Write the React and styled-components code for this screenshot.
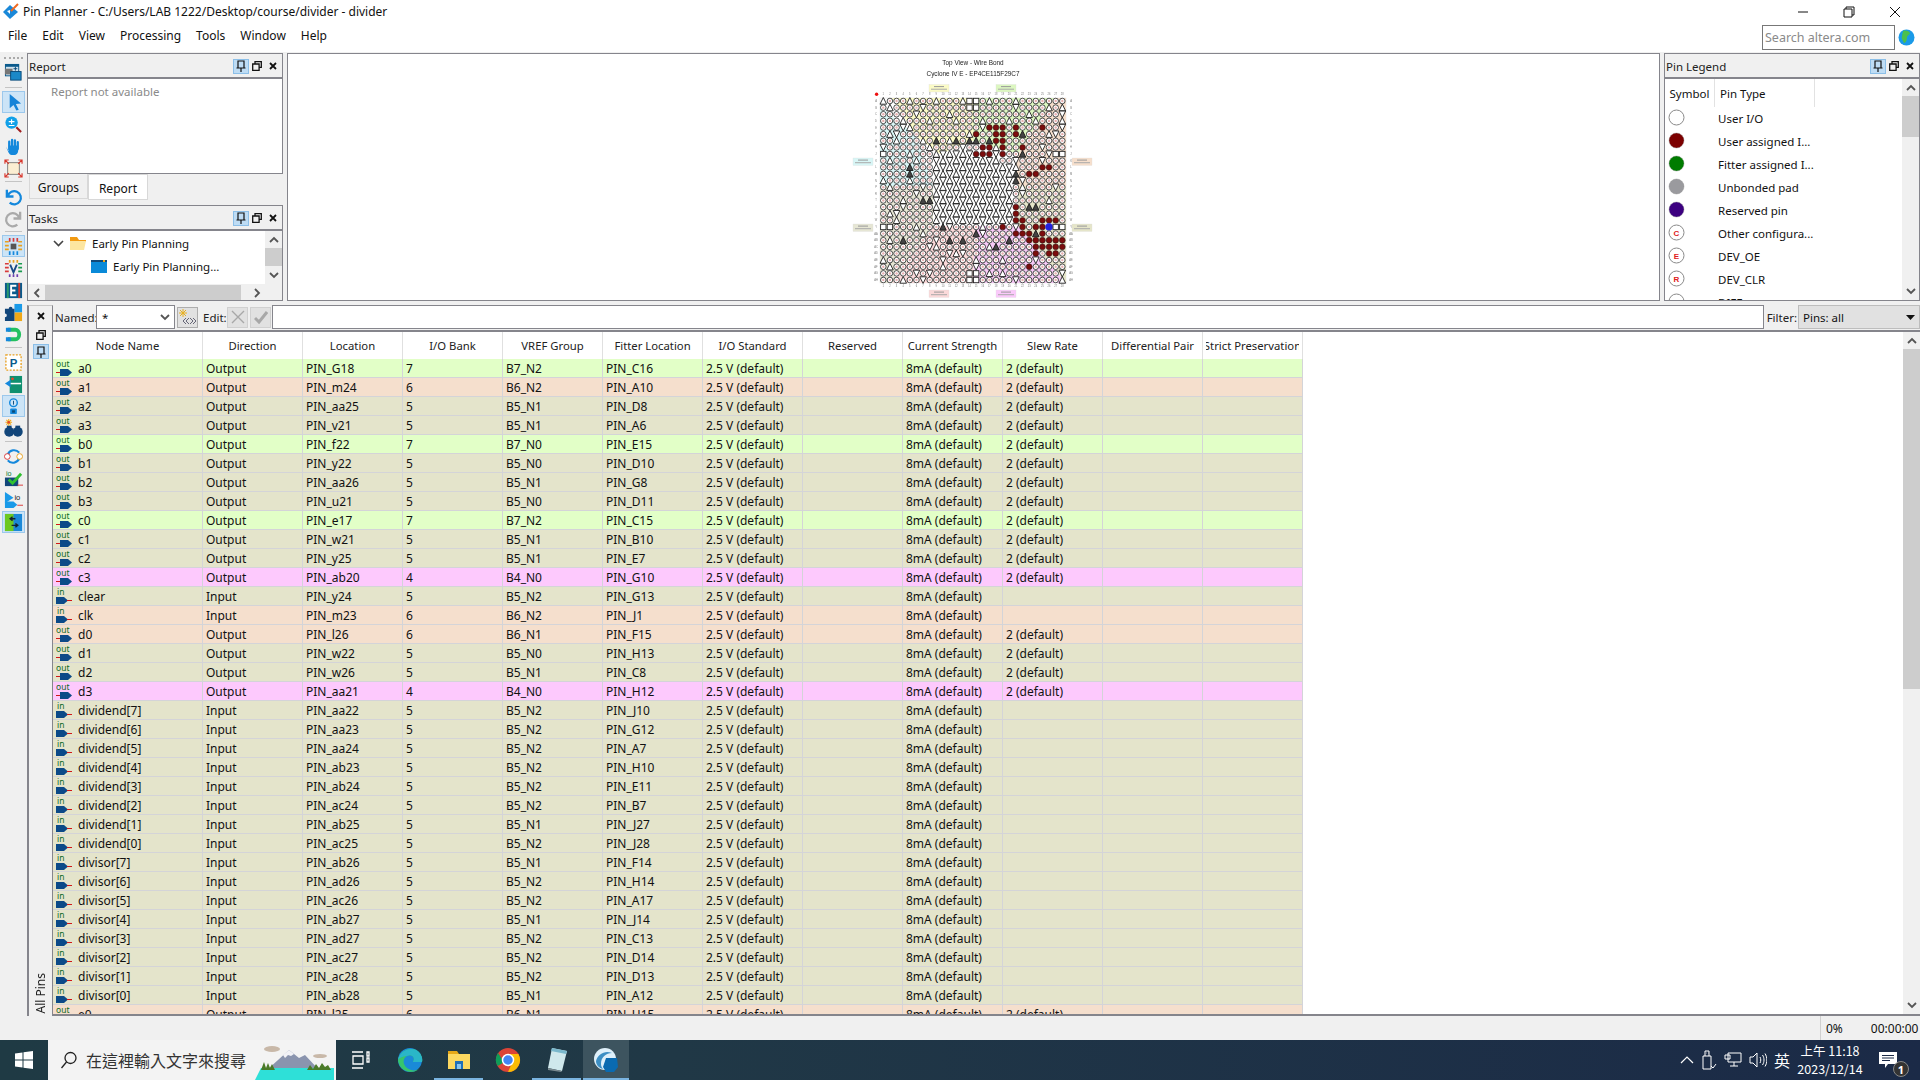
import React from "react";
import styled, { createGlobalStyle } from "styled-components";

const UI_FONT = `"Noto Sans", "Open Sans", sans-serif`;

const GlobalStyle = createGlobalStyle`
  html, body { margin: 0; padding: 0; background: #f0f0f0; }
  * { box-sizing: border-box; }
  body { font-family: ${UI_FONT}; font-size: 12px; color: #111; }
`;

// data
const PINS = [
  ["a0", "Output", "PIN_G18", 7, "B7_N2", "PIN_C16"],
  ["a1", "Output", "PIN_m24", 6, "B6_N2", "PIN_A10"],
  ["a2", "Output", "PIN_aa25", 5, "B5_N1", "PIN_D8"],
  ["a3", "Output", "PIN_v21", 5, "B5_N1", "PIN_A6"],
  ["b0", "Output", "PIN_f22", 7, "B7_N0", "PIN_E15"],
  ["b1", "Output", "PIN_y22", 5, "B5_N0", "PIN_D10"],
  ["b2", "Output", "PIN_aa26", 5, "B5_N1", "PIN_G8"],
  ["b3", "Output", "PIN_u21", 5, "B5_N0", "PIN_D11"],
  ["c0", "Output", "PIN_e17", 7, "B7_N2", "PIN_C15"],
  ["c1", "Output", "PIN_w21", 5, "B5_N1", "PIN_B10"],
  ["c2", "Output", "PIN_y25", 5, "B5_N1", "PIN_E7"],
  ["c3", "Output", "PIN_ab20", 4, "B4_N0", "PIN_G10"],
  ["clear", "Input", "PIN_y24", 5, "B5_N2", "PIN_G13"],
  ["clk", "Input", "PIN_m23", 6, "B6_N2", "PIN_J1"],
  ["d0", "Output", "PIN_l26", 6, "B6_N1", "PIN_F15"],
  ["d1", "Output", "PIN_w22", 5, "B5_N0", "PIN_H13"],
  ["d2", "Output", "PIN_w26", 5, "B5_N1", "PIN_C8"],
  ["d3", "Output", "PIN_aa21", 4, "B4_N0", "PIN_H12"],
  ["dividend[7]", "Input", "PIN_aa22", 5, "B5_N2", "PIN_J10"],
  ["dividend[6]", "Input", "PIN_aa23", 5, "B5_N2", "PIN_G12"],
  ["dividend[5]", "Input", "PIN_aa24", 5, "B5_N2", "PIN_A7"],
  ["dividend[4]", "Input", "PIN_ab23", 5, "B5_N2", "PIN_H10"],
  ["dividend[3]", "Input", "PIN_ab24", 5, "B5_N2", "PIN_E11"],
  ["dividend[2]", "Input", "PIN_ac24", 5, "B5_N2", "PIN_B7"],
  ["dividend[1]", "Input", "PIN_ab25", 5, "B5_N1", "PIN_J27"],
  ["dividend[0]", "Input", "PIN_ac25", 5, "B5_N2", "PIN_J28"],
  ["divisor[7]", "Input", "PIN_ab26", 5, "B5_N1", "PIN_F14"],
  ["divisor[6]", "Input", "PIN_ad26", 5, "B5_N2", "PIN_H14"],
  ["divisor[5]", "Input", "PIN_ac26", 5, "B5_N2", "PIN_A17"],
  ["divisor[4]", "Input", "PIN_ab27", 5, "B5_N1", "PIN_J14"],
  ["divisor[3]", "Input", "PIN_ad27", 5, "B5_N2", "PIN_C13"],
  ["divisor[2]", "Input", "PIN_ac27", 5, "B5_N2", "PIN_D14"],
  ["divisor[1]", "Input", "PIN_ac28", 5, "B5_N2", "PIN_D13"],
  ["divisor[0]", "Input", "PIN_ab28", 5, "B5_N1", "PIN_A12"],
  ["e0", "Output", "PIN_l25", 6, "B6_N1", "PIN_H15"],
];

const HEADERS = ["Node Name", "Direction", "Location", "I/O Bank", "VREF Group", "Fitter Location", "I/O Standard", "Reserved", "Current Strength", "Slew Rate", "Differential Pair", "Strict Preservation"];

const BANK_TONE = { 7: "#e2ffc7", 6: "#f5dfcd", 5: "#e4e4cb", 4: "#fdc9fd" };

const LEGEND = [
  ["User I/O", "#fff", ""],
  ["User assigned I...", "#7c0000", ""],
  ["Fitter assigned I...", "#007c00", ""],
  ["Unbonded pad", "#9a9a9e", ""],
  ["Reserved pin", "#3c0080", ""],
  ["Other configura...", "#fff", "C"],
  ["DEV_OE", "#fff", "E"],
  ["DEV_CLR", "#fff", "R"],
];

// chip drawing
const px = (c) => 43.3 + 6.63 * c;
const py = (r) => 50 + 6.63 * r;
const cell = ([x, y]) => `${Math.round((y - 150) / 19.9)},${Math.round((x - 130) / 19.9)}`;

const RED_PINS = new Set([
  [447, 230], [467, 230], [487, 230], [527, 230], [607, 230], [407, 250], [467, 250], [487, 250], [527, 250],
  [467, 270], [487, 270], [427, 289], [447, 289], [487, 289], [547, 289], [407, 309], [427, 309], [447, 309], [487, 309],
  [607, 349], [627, 349], [567, 369], [587, 369], [527, 468], [527, 488], [527, 508], [547, 508], [607, 508], [627, 508], [647, 508],
  [487, 528], [547, 528], [587, 528], [607, 528], [527, 547], [547, 547], [567, 547], [607, 547],
  [567, 567], [587, 567], [607, 567], [627, 567], [647, 567], [667, 567], [587, 587], [607, 587], [627, 587], [647, 587], [667, 587],
  [587, 607], [627, 607], [647, 607], [567, 647],
].map(cell));

const DARK_TRIANGLES = new Set([
  [547, 250], [407, 270], [447, 270], [547, 309], [290, 270], [349, 270], [389, 270], [209, 349], [209, 369], [527, 369], [527, 389],
  [249, 448], [269, 448], [567, 468], [587, 468], [309, 528], [407, 547], [587, 547], [189, 567], [328, 567], [368, 567], [507, 567], [467, 587],
].map(cell));

const SQUARES = new Set(["0,13", "0,14", "1,13", "1,14", "26,13", "26,14", "27,13", "27,14", "8,0", "8,26", "8,27", "19,0", "19,1", "19,26", "19,27"]);

const hash = (r, c) => ((r * 31 + c * 17 + r * c * 7) * 2654435) % 97;

const triangle = (x, y, up, fill) => {
  const s = up ? 1 : -1;
  return <polygon key={`${x}-${y}`} points={`${x},${y - 3.5 * s} ${x + 3.3},${y + 3.2 * s} ${x - 3.3},${y + 3.2 * s}`} fill={fill} stroke="#111" strokeWidth="0.85" />;
};

const pinShape = (r, c) => {
  const key = `${r},${c}`;
  const x = px(c);
  const y = py(r);
  if (key === "19,25") return <circle key={key} cx={x} cy={y} r="3.6" fill="#2222dd" stroke="#4444ff" strokeWidth="0.8" strokeDasharray="1 0.6" />;
  if (SQUARES.has(key)) return <rect key={key} x={x - 2.7} y={y - 2.7} width="5.4" height="5.4" fill="#fff" stroke="#222" strokeWidth="0.9" />;
  if (RED_PINS.has(key)) return <circle key={key} cx={x} cy={y} r="2.9" fill="#7c0c0c" stroke="#2a1a1a" strokeWidth="0.6" />;
  if (DARK_TRIANGLES.has(key)) return triangle(x, y, true, "#444");
  const center = c >= 8 && c <= 19 && r >= 8 && r <= 18 && !(c >= 18 && r <= 9);
  if (center || hash(r, c) < 16) return triangle(x, y, (r + c) % 2 === 0, "#fff");
  return (
    <g key={key}>
      <circle cx={x} cy={y} r="2.8" fill="#fff" stroke="#222" strokeWidth="0.8" />
      <circle cx={x} cy={y} r="1.2" fill="#e8b0b0" />
    </g>
  );
};

const ROW_LETTERS = "A B C D E F G H J K L M N P R T U V W Y AA AB AC AD AE AF AG AH".split(" ");

const BankLabel = ({ x, y, fill }) => (
  <g>
    <rect x={x} y={y} width="20" height="7.5" fill={fill} stroke="#ddd" strokeWidth="0.3" />
    <rect x={x + 5} y={y + 1.6} width="10" height="1" fill="#999" />
    <rect x={x + 2} y={y + 4.2} width="16" height="1" fill="#aaa" />
  </g>
);

const ChipView = () => {
  const pins = [];
  for (let r = 0; r < 28; r++) for (let c = 0; c < 28; c++) pins.push(pinShape(r, c));
  return (
    <ChipSvg width="260" height="246" viewBox="0 3 260 246">
      <text x="133" y="14" textAnchor="middle" fontSize="6.4" fontFamily="Liberation Sans" fill="#222">Top View - Wire Bond</text>
      <text x="133" y="25" textAnchor="middle" fontSize="6.4" fontFamily="Liberation Sans" fill="#222">Cyclone IV E - EP4CE115F29C7</text>
      <BankLabel x={89} y={33.5} fill="#fbfbc6" />
      <BankLabel x={156} y={33.5} fill="#dcf7c0" />
      <BankLabel x={89} y={239} fill="#fbd9d9" />
      <BankLabel x={156} y={239} fill="#fbc9fb" />
      <BankLabel x={13} y={107} fill="#d8f6f6" />
      <BankLabel x={13} y={173} fill="#e6e6d4" />
      <BankLabel x={232} y={107} fill="#f6dfcc" />
      <BankLabel x={232} y={173} fill="#e5e5c9" />
      <rect x="40" y="47" width="186" height="185" fill="#fff" stroke="#ddd" strokeWidth="0.5" />
      <polygon points="52,47 133,47 133,90 100,103 76,85" fill="#fbfbc6" />
      <polygon points="133,47 214,47 178,103 133,90" fill="#dcf7c0" />
      <polygon points="226,47 214,47 175,108 178,135 226,135" fill="#f6dfcc" />
      <polygon points="226,135 178,135 178,175 226,232" fill="#e5e5c9" />
      <polygon points="226,232 178,175 135,175 133,232" fill="#f6c9f6" />
      <polygon points="133,232 135,175 93,175 52,232" fill="#fbd9d9" />
      <polygon points="40,135 93,135 93,175 52,232 40,232" fill="#e6e6d4" />
      <polygon points="40,55 76,85 93,135 40,135" fill="#d8f6f6" />
      {Array.from({ length: 28 }, (_, i) => (
        <g key={i} fontSize="2.6" fontFamily="Liberation Sans" fill="#777" textAnchor="middle">
          <text x={px(i)} y="44">{i + 1}</text>
          <text x={px(i)} y="236">{i + 1}</text>
          <text x="36" y={py(i) + 1}>{ROW_LETTERS[i]}</text>
          <text x="231" y={py(i) + 1}>{ROW_LETTERS[i]}</text>
        </g>
      ))}
      <circle cx="36.6" cy="43.3" r="1.7" fill="#ee1111" />
      {pins}
    </ChipSvg>
  );
};

// small icons
const PinGlyph = () => (
  <svg width="10" height="12" viewBox="0 0 10 12"><path d="M2 1h6v7H2zM0.5 8h9M5 8v4" fill="none" stroke="#111" strokeWidth="1.2" /></svg>
);
const RestoreGlyph = () => (
  <svg width="10" height="10" viewBox="0 0 10 10"><path d="M3 2.5V.7h6.3v5.6H7.2M.7 3h6.4v6.3H.7z" fill="none" stroke="#111" strokeWidth="1.3" /></svg>
);
const CloseGlyph = () => (
  <svg width="8" height="8" viewBox="0 0 8 8"><path d="M1 1l6 6M7 1L1 7" stroke="#111" strokeWidth="1.8" /></svg>
);
const ChevronUp = () => (
  <svg width="10" height="7" viewBox="0 0 10 7"><path d="M1 6l4-4 4 4" fill="none" stroke="#555" strokeWidth="1.8" /></svg>
);
const ChevronDown = () => (
  <svg width="10" height="7" viewBox="0 0 10 7"><path d="M1 1l4 4 4-4" fill="none" stroke="#555" strokeWidth="1.8" /></svg>
);
const ChevronLeft = () => (
  <svg width="7" height="10" viewBox="0 0 7 10"><path d="M6 1L2 5l4 4" fill="none" stroke="#555" strokeWidth="1.8" /></svg>
);
const ChevronRight = () => (
  <svg width="7" height="10" viewBox="0 0 7 10"><path d="M1 1l4 4-4 4" fill="none" stroke="#555" strokeWidth="1.8" /></svg>
);

const TOOL_ICONS = {
  panel: <><rect x="1" y="1" width="15" height="13" fill="#0a5a8c" /><rect x="2" y="4" width="13" height="9" fill="#cfe2ee" /><rect x="1" y="6" width="8" height="6" fill="#777" /><rect x="7" y="9" width="11" height="9" fill="#1a88c8" stroke="#0a4a78" /><path d="M12 4v4M10 6h4" stroke="#0a4a78" /></>,
  select: <path d="M6 1v15l4-3.5 3 6 2.500-1-3-6 5.500-.5z" fill="#1583d8" />,
  zoom: <><circle cx="8" cy="8" r="6.5" fill="#12a0e8" /><path d="M5 7h6M8 4.500v5M5 11h6" stroke="#fff" strokeWidth="1.2" /><path d="M13 13l5 5" stroke="#a02020" strokeWidth="2.2" /></>,
  hand: <><path d="M5.500 5v8M8.500 3v8M11.500 3.500v8M14.500 5.500v7" stroke="#1488dc" strokeWidth="2.4" strokeLinecap="round" /><path d="M2 10l3 5 0-6h10v5c0 3-2 5-4 5H8c-3 0-4-5-6-9z" fill="#1488dc" /></>,
  fit: <><rect x="4" y="4" width="12" height="12" fill="#fbeed2" stroke="#333" strokeWidth=".6" /><path d="M1 5V1h4M15 1h4v4M19 15v4h-4M5 19H1v-4M1 1l4 4M19 1l-4 4M19 19l-4-4M1 19l4-4" fill="none" stroke="#d8352a" strokeWidth="1.2" /></>,
  undo: <path d="M3 3v7h7M4 9.500a7 7 0 1 1 2 7" fill="none" stroke="#1488dc" strokeWidth="2.4" />,
  redo: <path d="M17 3v7h-7M16 9.500a7 7 0 1 0-2 7" fill="none" stroke="#aaa" strokeWidth="2.4" />,
  chip: <><rect x="7" y="7" width="6" height="6" fill="#555" /><path d="M1 5h4M1 9h4M1 13h4M15 5h4M15 9h4M15 13h4" stroke="#e8a020" strokeWidth="1.8" /><path d="M6 1v4M10 1v4M14 1v4" stroke="#d83a3a" strokeWidth="1.8" /><path d="M6 15v4M10 15v4M14 15v4" stroke="#1488dc" strokeWidth="1.8" /></>,
  vlog: <><path d="M1 5h4M1 9h4M1 13h4" stroke="#d83a3a" strokeWidth="1.8" /><path d="M15 5h4M15 9h4M15 13h4" stroke="#1a9a50" strokeWidth="1.8" /><path d="M6 1v3M10 1v3M14 1v3" stroke="#e8a020" strokeWidth="1.8" /><path d="M6 16v3M10 16v3M14 16v3" stroke="#7040b0" strokeWidth="1.8" /><path d="M6.500 6l3.500 8 3.500-8" fill="none" stroke="#1a4a88" strokeWidth="2" /></>,
  edit: <><rect x="1" y="2" width="18" height="16" fill="#0a5a8c" /><rect x="3" y="2" width="2" height="16" fill="#2a9a6a" /><rect x="15" y="2" width="2" height="16" fill="#d8352a" /><path d="M13 5H7.500v10H13M7.500 10H12" fill="none" stroke="#fff" strokeWidth="2" /></>,
  puzzle: <><rect x="11" y="1" width="8" height="9" fill="#1a9ae8" /><rect x="11" y="10" width="8" height="9" fill="#f0a818" /><path d="M1 6h4a2 2 0 0 1 4 0h2v13H1v-4a2 2 0 0 0 0-4z" fill="#12467a" /></>,
  flow: <><path d="M4 3h8a6 7 0 0 1 0 14H4v-4h8a2 3 0 0 0 0-6H4z" fill="#22c060" /><path d="M2 3h5v4H2zM2 13h5v4H2z" fill="#1488dc" /></>,
  pblock: <><rect x="2" y="2" width="16" height="16" fill="#fff" stroke="#e8a020" strokeWidth="1.4" strokeDasharray="2 1.5" /><text x="10" y="15" textAnchor="middle" fontSize="12" fontWeight="700" fontFamily="Liberation Sans" fill="#0a5a8c">P</text></>,
  board: <><rect x="6" y="1" width="13" height="18" fill="#0f9070" /><path d="M1 9l6-4v8z" fill="#1488dc" /><path d="M7 9h11" stroke="#fff" strokeWidth="1.6" /><circle cx="9" cy="4" r="1.5" fill="#e8452a" /></>,
  pad: <><circle cx="10" cy="6" r="4" fill="none" stroke="#1488dc" strokeWidth="1.5" /><path d="M10 4v4" stroke="#0a4a78" /><rect x="6.5" y="12" width="7" height="6" rx="1" fill="#1488dc" /><rect x="8.5" y="14" width="3" height="2.5" fill="#0a4a78" /></>,
  binoculars: <><circle cx="5.5" cy="13.5" r="5.2" fill="#12467a" /><circle cx="14.5" cy="13.5" r="5.2" fill="#12467a" /><rect x="3" y="7" width="5" height="6" fill="#12467a" /><rect x="12" y="7" width="5" height="6" fill="#12467a" /><path d="M5 0v7M1.500 3.500h7M2.500 1l5 5M7.500 1l-5 5" stroke="#f0a818" strokeWidth="1.1" /><circle cx="5" cy="3.5" r="1.3" fill="#e8452a" /></>,
  sync: <><path d="M4 8a7 7 0 0 1 12-2M16 12a7 7 0 0 1-12 2" fill="none" stroke="#1488dc" strokeWidth="2.2" /><circle cx="3.5" cy="10" r="3" fill="#fff" stroke="#d83a3a" /><circle cx="16.5" cy="10" r="3" fill="#fff" stroke="#e8a020" /></>,
  ioCheck: <><rect x="1" y="9" width="14" height="9" fill="#12467a" /><path d="M5 11l4 4 9-10" fill="none" stroke="#30c030" strokeWidth="3" /><path d="M14 17h6" stroke="#d83a3a" /><text x="2" y="7" fontSize="7.5" fontFamily="Liberation Sans" fill="#0a7a3a">io</text></>,
  ioArrow: <><path d="M1 1l9 6-9 6z" fill="#1a9ae8" /><path d="M1 11h9l4 3.500-4 3.500H1z" fill="#1a9ae8" /><path d="M14 15h6" stroke="#d83a3a" /><text x="11" y="9" fontSize="8" fontFamily="Liberation Sans" fill="#222">io</text></>,
  compare: <><rect x="1" y="1" width="18" height="18" fill="#1a88d8" /><rect x="1" y="1" width="9" height="18" fill="#6cc820" /><path d="M12 6H7m2-2L6.500 6 9 8M8 13h6m-2-2l2.500 2-2.500 2" fill="none" stroke="#123" strokeWidth="1.5" /></>,
};

const TOOL_GROUPS = [
  [["panel"]],
  [["select", true], ["zoom"], ["hand"], ["fit"]],
  [["undo"], ["redo"]],
  [["chip", true], ["vlog"], ["edit"], ["puzzle"], ["flow"]],
  [["pblock"], ["board"], ["pad", true], ["binoculars"]],
  [["sync"], ["ioCheck"], ["ioArrow"], ["compare", true]],
];

const RowIcon = ({ out }) =>
  out ? (
    <svg width="17" height="18" viewBox="0 0 17 18">
      <text x="0" y="7.5" fontSize="8.5" fontFamily="Noto Sans" fill="#0f6a1f">out</text>
      <path d="M0 13.5h5" stroke="#d01818" />
      <path d="M4 10h8l4 3.500-4 3.500H4z" fill="#0c4a88" />
    </svg>
  ) : (
    <svg width="17" height="18" viewBox="0 0 17 18">
      <text x="1" y="7.5" fontSize="8.5" fontFamily="Noto Sans" fill="#0f6a1f">in</text>
      <path d="M0 10h8l4 3.500-4 3.500H0z" fill="#0c4a88" />
      <path d="M11 13.5h5" stroke="#d01818" />
    </svg>
  );

const LegendSymbol = ({ fill, letter }) => (
  <svg width="17" height="17" viewBox="0 0 17 17">
    <circle cx="8.5" cy="8.5" r="7.5" fill={fill} stroke="#8a8a8a" strokeWidth={fill === "#fff" ? 1 : 0.4} />
    {letter && <text x="8.5" y="11.5" textAnchor="middle" fontSize="8" fontWeight="700" fontFamily="Liberation Sans" fill="#e02020">{letter}</text>}
  </svg>
);

const DockHeader = ({ title }) => (
  <DockTitle>
    <DockLabel>{title}</DockLabel>
    <HeaderBtn $active><PinGlyph /></HeaderBtn>
    <HeaderBtn><RestoreGlyph /></HeaderBtn>
    <HeaderBtn><CloseGlyph /></HeaderBtn>
  </DockTitle>
);

const VScroll = ({ thumbHeight }) => (
  <ScrollTrack>
    <ScrollArrow><ChevronUp /></ScrollArrow>
    <ScrollBody>
      <ScrollThumb style={{ height: thumbHeight }} />
    </ScrollBody>
    <ScrollArrow><ChevronDown /></ScrollArrow>
  </ScrollTrack>
);

const TrayIcons = () => (
  <>
    <svg width="14" height="8" viewBox="0 0 14 8"><path d="M1 7l6-6 6 6" fill="none" stroke="#fff" strokeWidth="1.2" /></svg>
    <svg width="16" height="20" viewBox="0 0 16 20"><path d="M2 6h8v13H2zM4 6V1h4v5M5 3h.5M7 3h.5M10 16l2 2 3-4" fill="none" stroke="#fff" /></svg>
    <svg width="18" height="16" viewBox="0 0 18 16"><path d="M4 1h13v9H4zM10 10v4M6 14h8M1 3h5v4H1z" fill="none" stroke="#fff" /></svg>
    <svg width="18" height="16" viewBox="0 0 18 16"><path d="M1 5h3l4-4v14l-4-4H1zM11 5c1 2 1 4 0 6M13.500 3c2 3 2 7 0 10M16 1.500c2.500 4 2.500 9 0 13" fill="none" stroke="#fff" /></svg>
  </>
);

const App = () => {
  return (
    <Screen>
      <GlobalStyle />
      <TitleBar>
        <svg width="18" height="18" viewBox="0 0 18 18">
          <path d="M1 9l7-7 8 7-8 7z" fill="#1a88d8" />
          <path d="M5 8l3-1v4z" fill="#fff" />
          <path d="M9 8l7-7" stroke="#f06a20" strokeWidth="2" />
        </svg>
        <TitleText>Pin Planner - C:/Users/LAB 1222/Desktop/course/divider - divider</TitleText>
        <WindowControls>
          <WindowBtn><svg width="12" height="12" viewBox="0 0 12 12"><path d="M1 6h10" stroke="#111" /></svg></WindowBtn>
          <WindowBtn><svg width="12" height="12" viewBox="0 0 12 12"><path d="M3 3V1h8v8H9M1 3h8v8H1z" fill="none" stroke="#111" /></svg></WindowBtn>
          <WindowBtn><svg width="12" height="12" viewBox="0 0 12 12"><path d="M1 1l10 10M11 1L1 11" stroke="#111" /></svg></WindowBtn>
        </WindowControls>
      </TitleBar>
      <MenuBar>
        {["File", "Edit", "View", "Processing", "Tools", "Window", "Help"].map((m) => (
          <MenuItem key={m}>{m}</MenuItem>
        ))}
        <SearchBox>Search altera.com</SearchBox>
        <GlobeIcon width="17" height="17" viewBox="0 0 17 17">
          <circle cx="8.5" cy="8.5" r="8" fill="#1a9ae8" />
          <path d="M5 2c3-1 6 0 7 2-1 3-3 2-3 5s-2 5-3 5c-1-3-3-4-2-7 0-2 1-3 1-5z" fill="#4cc04c" />
        </GlobeIcon>
      </MenuBar>
      <Main>
        <ToolBar>
          <Grip />
          {TOOL_GROUPS.map((group, i) => (
            <React.Fragment key={i}>
              {i > 0 && <ToolSep $wide={i === 1} />}
              {group.map(([name, active]) => (
                <ToolBtn key={name} $active={active}>
                  <svg width="19" height="19" viewBox="0 0 20 20">{TOOL_ICONS[name]}</svg>
                </ToolBtn>
              ))}
            </React.Fragment>
          ))}
        </ToolBar>
        <Workspace>
          <UpperRow>
            <LeftColumn>
              <ReportDock>
                <DockHeader title="Report" />
                <ReportBody>Report not available</ReportBody>
              </ReportDock>
              <TabRow>
                <Tab>Groups</Tab>
                <Tab $active>Report</Tab>
              </TabRow>
              <TasksDock>
                <DockHeader title="Tasks" />
                <TasksBody>
                  <TasksMain>
                    <TreeArea>
                      <TreeRow $indent={25}>
                        <svg width="11" height="7" viewBox="0 0 11 7"><path d="M1 1l4.500 4.500L10 1" fill="none" stroke="#444" strokeWidth="1.6" /></svg>
                        <svg width="16" height="13" viewBox="0 0 16 13">
                          <path d="M0 0h7l2 3h7v2H0z" fill="#f29a12" />
                          <path d="M0 13V4h16l-2 9z" fill="#fde6a0" />
                        </svg>
                        <span>Early Pin Planning</span>
                      </TreeRow>
                      <TreeRow $indent={63}>
                        <svg width="16" height="13" viewBox="0 0 16 13">
                          <rect width="16" height="13" fill="#0a8ad8" />
                          <rect width="16" height="2" fill="#124a78" />
                          <rect x="12" width="2" height="2" fill="#f0a818" />
                        </svg>
                        <span>Early Pin Planning...</span>
                      </TreeRow>
                    </TreeArea>
                    <VScroll thumbHeight={18} />
                  </TasksMain>
                  <HScroll>
                    <HArrow><ChevronLeft /></HArrow>
                    <HThumb />
                    <HArrowEnd><ChevronRight /></HArrowEnd>
                  </HScroll>
                </TasksBody>
              </TasksDock>
            </LeftColumn>
            <CanvasPane>
              <ChipView />
            </CanvasPane>
            <LegendDock>
              <DockHeader title="Pin Legend" />
              <LegendBody>
                <LegendList>
                  <LegendHead>
                    <LegendSymbolHead>Symbol</LegendSymbolHead>
                    <LegendTypeHead>Pin Type</LegendTypeHead>
                  </LegendHead>
                  {LEGEND.map(([label, fill, letter]) => (
                    <LegendRow key={label}>
                      <LegendSymbolCell><LegendSymbol fill={fill} letter={letter} /></LegendSymbolCell>
                      <span>{label}</span>
                    </LegendRow>
                  ))}
                  <LegendRow>
                    <LegendSymbolCell><LegendSymbol fill="#fff" /></LegendSymbolCell>
                    <span>DIFF</span>
                  </LegendRow>
                </LegendList>
                <VScroll thumbHeight={41} />
              </LegendBody>
            </LegendDock>
          </UpperRow>
          <LowerPanel>
            <SideStrip>
              <SideBtn><CloseGlyph /></SideBtn>
              <SideBtn><RestoreGlyph /></SideBtn>
              <SideBtn $active><PinGlyph /></SideBtn>
              <VerticalTab>All Pins</VerticalTab>
            </SideStrip>
            <PinsPane>
              <FilterBar>
                <NamedLabel>Named:</NamedLabel>
                <NamedCombo>
                  <span>*</span>
                  <ChevronDown />
                </NamedCombo>
                <WizardBtn>
                  <svg width="18" height="18" viewBox="0 0 18 18">
                    <path d="M4 1v8M0 5h8M1 2l6 6M7 2L1 8" stroke="#e8b020" />
                    <path d="M7 10l-3 3 3 3M10 10l-3 3 3 3M11 10l3 3-3 3M14 10l3 3-3 3" fill="none" stroke="#667" />
                  </svg>
                </WizardBtn>
                <EditLabel>Edit:</EditLabel>
                <GreyBtn>
                  <svg width="14" height="14" viewBox="0 0 14 14"><path d="M1 1l12 12M13 1L1 13" stroke="#a8a8a8" strokeWidth="1.4" /></svg>
                </GreyBtn>
                <GreyBtn>
                  <svg width="14" height="14" viewBox="0 0 14 14"><path d="M1 8l4 4 8-10" fill="none" stroke="#a8a8a8" strokeWidth="3" /></svg>
                </GreyBtn>
                <EditInput />
                <FilterLabel>Filter:</FilterLabel>
                <FilterSelect>
                  <span>Pins: all</span>
                  <svg width="9" height="5" viewBox="0 0 9 5"><path d="M0 0h9L4.500 5z" fill="#111" /></svg>
                </FilterSelect>
              </FilterBar>
              <TableWrap>
                <TableArea>
                  <HeaderRow>
                    {HEADERS.map((h) => (
                      <HeaderCell key={h}><HeaderLabel>{h}</HeaderLabel></HeaderCell>
                    ))}
                  </HeaderRow>
                  {PINS.map(([name, dir, loc, bank, vref, fitter]) => {
                    const out = dir === "Output";
                    return (
                      <PinRow key={name} $tone={BANK_TONE[bank]}>
                        <NameCell><RowIcon out={out} /><span>{name}</span></NameCell>
                        <Cell>{dir}</Cell>
                        <Cell>{loc}</Cell>
                        <Cell>{bank}</Cell>
                        <Cell>{vref}</Cell>
                        <Cell>{fitter}</Cell>
                        <Cell>2.5 V (default)</Cell>
                        <Cell />
                        <Cell>8mA (default)</Cell>
                        <Cell>{out ? "2 (default)" : ""}</Cell>
                        <Cell />
                        <Cell />
                      </PinRow>
                    );
                  })}
                </TableArea>
                <VScroll thumbHeight={340} />
              </TableWrap>
            </PinsPane>
          </LowerPanel>
        </Workspace>
      </Main>
      <StatusBar>
        <StatusPercent>0%</StatusPercent>
        <StatusTime>00:00:00</StatusTime>
      </StatusBar>
      <Taskbar>
        <StartBtn>
          <svg width="18" height="18" viewBox="0 0 18 18">
            <path d="M0 2.500L7.500 1.400V8.500H0zM8.500 1.300L18 0v8.500H8.500zM0 9.500h7.500v7.100L0 15.500zM8.500 9.500H18V18l-9.500-1.300z" fill="#fff" />
          </svg>
        </StartBtn>
        <SearchField>
          <svg width="18" height="18" viewBox="0 0 18 18">
            <circle cx="10.5" cy="7" r="5.5" fill="none" stroke="#222" strokeWidth="1.3" />
            <path d="M6.500 11l-5 6" stroke="#222" strokeWidth="1.3" />
          </svg>
          <SearchText>在這裡輸入文字來搜尋</SearchText>
          <svg width="79" height="40" viewBox="0 0 79 40">
            <ellipse cx="17" cy="9" rx="8" ry="3" fill="#c8b8a8" />
            <ellipse cx="65" cy="16" rx="7" ry="2" fill="#c8b8a8" />
            <path d="M12 30l22-20 10 8 6-3 14 15z" fill="#8a94ae" />
            <path d="M28 15l6-5 5 4-3 2-3-1-3 3z" fill="#f2f2f6" />
            <path d="M0 40l6-12h73v12z" fill="#2ee0d8" />
            <path d="M6 30l3-8 2 6 2-5 2 5 2-4 3 6zM52 30l3-5 3 4 3-5 3 4 3-5 3 4 3-2 3 5z" fill="#4a7a28" />
          </svg>
        </SearchField>
        <TaskIcons>
          <TaskBtn>
            <svg width="20" height="18" viewBox="0 0 20 18"><path d="M1 1h11M1 17h11M2 5h10v8H2zM16 1h2v4h-2zM16 7h2v4h-2zM16 13h0" fill="none" stroke="#fff" strokeWidth="1.3" /></svg>
          </TaskBtn>
          <TaskBtn>
            <svg width="26" height="26" viewBox="0 0 26 26">
              <circle cx="13" cy="13" r="12" fill="#1a8ad8" />
              <path d="M1 13C3 4 12 0 19 3c5 3 7 8 6 12h-9c3-5-2-8-6-6-4 2-5 8 0 12 4 3 9 3 12 1-6 5-15 3-19-3C2 17 1 15 1 13z" fill="#36c56c" />
              <path d="M10 9c4-2 9 1 6 6h9c1-4-1-9-6-12C12 0 3 4 1 13c2-3 6-4 9-4z" fill="#2ab6c8" />
            </svg>
          </TaskBtn>
          <TaskBtn $open>
            <svg width="24" height="24" viewBox="0 0 24 24">
              <path d="M1 3h9l2 3H1z" fill="#e6a818" />
              <path d="M1 6h22v15H1z" fill="#fcd860" />
              <path d="M8 13h8v8H8z" fill="#1f6fb8" />
              <path d="M10 16h4v5h-4z" fill="#88c4ee" />
            </svg>
          </TaskBtn>
          <TaskBtn>
            <svg width="26" height="26" viewBox="0 0 26 26">
              <circle cx="13" cy="13" r="12" fill="#db4437" />
              <path d="M13 13L2.600 19A12 12 0 0 1 3 6l6 9z" fill="#0f9d58" />
              <path d="M13 25a12 12 0 0 0 10.400-18H13l4 9z" fill="#fbbc05" />
              <circle cx="13" cy="13" r="5.5" fill="#4285f4" stroke="#fff" strokeWidth="1.5" />
            </svg>
          </TaskBtn>
          <TaskBtn $open>
            <svg width="24" height="26" viewBox="0 0 24 26">
              <path d="M7 1l15 3-5 20-14-3z" fill="#cfe8ec" />
              <path d="M7 1l15 3-1 3-15-3z" fill="#7ab8cc" />
              <path d="M3 21l14 3-1 1-13-2z" fill="#7a8a90" />
            </svg>
          </TaskBtn>
          <TaskBtn $open $active>
            <svg width="26" height="26" viewBox="0 0 26 26">
              <circle cx="12" cy="12" r="11" fill="#dff0fa" />
              <path d="M3 14C5 7 12 3 19 6 13 6 8 10 8 17c0 2 1 4 2 5-4-1-7-4-7-8z" fill="#3d8fc4" />
              <path d="M13 11h11l1 9-4 5h-8l-3-5z" fill="#0a6ab0" />
            </svg>
          </TaskBtn>
        </TaskIcons>
        <Tray>
          <TrayGroup><TrayIcons /></TrayGroup>
          <ImeLabel>英</ImeLabel>
          <Clock>
            <span>上午 11:18</span>
            <span>2023/12/14</span>
          </Clock>
          <Notify>
            <svg width="18" height="16" viewBox="0 0 18 16"><path d="M0 0h18v12H9l-3 4v-4H0z" fill="#fff" /><path d="M3 3.500h12M3 6h12M3 8.500h8" stroke="#1b2a47" /></svg>
            <NotifyBadge>1</NotifyBadge>
          </Notify>
        </Tray>
      </Taskbar>
    </Screen>
  );
};

//styles
const Screen = styled.div`
  width: 1920px;
  height: 1080px;
  display: flex;
  flex-direction: column;
  overflow: hidden;
  background: #f0f0f0;
`;

const TitleBar = styled.div`
  height: 26px;
  flex: none;
  display: flex;
  align-items: center;
  padding: 0 0 3px 2px;
  background: #fff;
`;

const TitleText = styled.div`
  margin-left: 3px;
  font-size: 12px;
  color: #111;
`;

const WindowControls = styled.div`
  margin-left: auto;
  display: flex;
  padding-right: 2px;
`;

const WindowBtn = styled.div`
  width: 46px;
  height: 20px;
  display: flex;
  align-items: center;
  justify-content: center;
`;

const MenuBar = styled.div`
  height: 26px;
  flex: none;
  display: flex;
  align-items: center;
  gap: 15px;
  padding: 0 5px 7px 8px;
  background: #fff;
  font-size: 12px;
`;

const MenuItem = styled.div`
  color: #111;
`;

const SearchBox = styled.div`
  align-self: flex-start;
  margin: -1px -12px 0 auto;
  width: 133px;
  height: 25px;
  padding: 3px 2px;
  border: 1px solid #777;
  background: #fff;
  color: #8a8a8a;
  font-size: 12.5px;
`;

const GlobeIcon = styled.svg`
  align-self: flex-start;
  margin-top: 3px;
`;

const Main = styled.div`
  height: 964px;
  flex: none;
  display: flex;
`;

const ToolBar = styled.div`
  width: 27px;
  flex: none;
  display: flex;
  flex-direction: column;
  align-items: center;
`;

const Grip = styled.div`
  width: 19px;
  height: 2px;
  margin: 5px 0 2px;
  border-top: 2px dotted #aaa;
`;

const ToolSep = styled.div`
  width: 17px;
  height: 1px;
  margin: ${({ $wide }) => ($wide ? "4px 0 3px" : "2px 0 3px")};
  background: #c4c4c4;
  flex: none;
`;

const ToolBtn = styled.div`
  width: 23px;
  height: 22px;
  flex: none;
  display: flex;
  align-items: center;
  justify-content: center;
  background: ${({ $active }) => ($active ? "#cce4f7" : "transparent")};
  border: 1px solid ${({ $active }) => ($active ? "#9cc8ec" : "transparent")};
`;

const Workspace = styled.div`
  flex: 1;
  min-width: 0;
  display: flex;
  flex-direction: column;
  gap: 4px;
  padding-top: 1px;
`;

const UpperRow = styled.div`
  height: 248px;
  flex: none;
  display: flex;
  gap: 4px;
`;

const LeftColumn = styled.div`
  width: 256px;
  flex: none;
  display: flex;
  flex-direction: column;
`;

const Dock = styled.div`
  display: flex;
  flex-direction: column;
  border: 1px solid #85858c;
  background: #fff;
`;

const ReportDock = styled(Dock)`
  height: 121px;
  flex: none;
`;

const TasksDock = styled(Dock)`
  flex: 1;
  min-height: 0;
  margin-top: 5px;
`;

const DockTitle = styled.div`
  height: 25px;
  flex: none;
  display: flex;
  align-items: center;
  padding: 1px 1px 0 1px;
  background: #f0f0f0;
  border-bottom: 2px solid #85858c;
  font-size: 11.5px;
`;

const DockLabel = styled.div`
  flex: 1;
  color: #222;
`;

const HeaderBtn = styled.div`
  width: 16px;
  height: 15px;
  display: flex;
  align-items: center;
  justify-content: center;
  background: ${({ $active }) => ($active ? "#bedcf4" : "transparent")};
  border: 1px solid ${({ $active }) => ($active ? "#8cbfe8" : "transparent")};
`;

const ReportBody = styled.div`
  flex: 1;
  padding: 5px 0 0 23px;
  color: #8a8a8a;
  font-size: 11.5px;
`;

const TabRow = styled.div`
  height: 26px;
  flex: none;
  display: flex;
  padding-left: 2px;
`;

const Tab = styled.div`
  width: ${({ $active }) => ($active ? "60px" : "59px")};
  height: ${({ $active }) => ($active ? "26px" : "25px")};
  display: flex;
  align-items: center;
  justify-content: center;
  padding-top: 3px;
  background: ${({ $active }) => ($active ? "#fff" : "#f0f0f0")};
  border: 1px solid #d8d8d8;
  border-top: ${({ $active }) => ($active ? "1px solid #d8d8d8" : "none")};
  font-size: 12px;
`;

const TasksBody = styled.div`
  flex: 1;
  min-height: 0;
  display: flex;
  flex-direction: column;
  overflow: hidden;
`;

const TasksMain = styled.div`
  height: 53px;
  flex: none;
  display: flex;
`;

const TreeArea = styled.div`
  flex: 1;
  padding-top: 1px;
  overflow: hidden;
`;

const TreeRow = styled.div`
  height: 23px;
  display: flex;
  align-items: center;
  gap: 6px;
  padding-left: ${({ $indent }) => $indent}px;
  font-size: 11.5px;
`;

const HScroll = styled.div`
  height: 17px;
  flex: none;
  display: flex;
  align-items: center;
  background: #f0f0f0;
`;

const HArrow = styled.div`
  width: 17px;
  height: 17px;
  flex: none;
  display: flex;
  align-items: center;
  justify-content: center;
`;

const HArrowEnd = styled(HArrow)`
  margin-left: auto;
  margin-right: 16px;
`;

const HThumb = styled.div`
  width: 196px;
  height: 15px;
  background: #cdcdcd;
`;

const ScrollTrack = styled.div`
  width: 17px;
  flex: none;
  display: flex;
  flex-direction: column;
  background: #f0f0f0;
`;

const ScrollArrow = styled.div`
  height: 17px;
  flex: none;
  display: flex;
  align-items: center;
  justify-content: center;
`;

const ScrollBody = styled.div`
  flex: 1;
  min-height: 0;
  overflow: hidden;
`;

const ScrollThumb = styled.div`
  background: #cdcdcd;
`;

const CanvasPane = styled.div`
  flex: 1;
  display: flex;
  justify-content: center;
  padding-right: 7px;
  border: 1px solid #85858c;
  background: #fff;
  overflow: hidden;
`;

const ChipSvg = styled.svg`
  flex: none;
  filter: blur(0.35px);
`;

const LegendDock = styled(Dock)`
  width: 256px;
  flex: none;
`;

const LegendBody = styled.div`
  flex: 1;
  min-height: 0;
  display: flex;
  overflow: hidden;
`;

const LegendList = styled.div`
  flex: 1;
  overflow: hidden;
  font-size: 11.5px;
`;

const LegendHead = styled.div`
  height: 28px;
  display: flex;
  align-items: center;
`;

const LegendSymbolHead = styled.div`
  width: 50px;
  height: 100%;
  display: flex;
  align-items: center;
  justify-content: center;
  border-right: 1px solid #e2e2e2;
`;

const LegendTypeHead = styled.div`
  width: 100px;
  height: 100%;
  display: flex;
  align-items: center;
  padding-left: 5px;
  border-right: 1px solid #e2e2e2;
`;

const LegendRow = styled.div`
  height: 23px;
  display: flex;
  align-items: center;
`;

const LegendSymbolCell = styled.div`
  width: 53px;
  flex: none;
  padding-left: 3px;
  display: flex;
  align-items: center;
  margin-top: -2px;
`;

const LowerPanel = styled.div`
  flex: 1;
  min-height: 0;
  display: flex;
`;

const SideStrip = styled.div`
  width: 26px;
  flex: none;
  display: flex;
  flex-direction: column;
  align-items: center;
  border-top: 1px solid #c8c8c8;
  border-left: 2px solid #85858c;
  border-right: 1px solid #85858c;
  background: #f0f0f0;
`;

const SideBtn = styled(HeaderBtn)`
  height: ${({ $active }) => ($active ? "15px" : "19px")};
`;

const VerticalTab = styled.div`
  margin-top: auto;
  margin-bottom: 2px;
  writing-mode: vertical-rl;
  transform: rotate(180deg);
  font-size: 12px;
  color: #222;
`;

const PinsPane = styled.div`
  flex: 1;
  min-width: 0;
  display: flex;
  flex-direction: column;
  border-bottom: 2px solid #85858c;
`;

const FilterBar = styled.div`
  height: 27px;
  flex: none;
  display: flex;
  align-items: center;
  padding: 0 0 1px 2px;
  border-bottom: 2px solid #85858c;
  font-size: 11.5px;
`;

const FilterLabel = styled.div`
  flex: none;
  color: #222;
  white-space: nowrap;
`;

const NamedLabel = styled(FilterLabel)`
  width: 41px;
`;

const EditLabel = styled(FilterLabel)`
  width: 24px;
  margin-left: 5px;
`;

const NamedCombo = styled.div`
  width: 79px;
  height: 24px;
  display: flex;
  align-items: center;
  justify-content: space-between;
  padding: 0 4px 0 5px;
  background: #fff;
  border: 1px solid #85858c;
`;

const WizardBtn = styled.div`
  width: 21px;
  height: 21px;
  margin-left: 2px;
  display: flex;
  align-items: center;
  justify-content: center;
  background: #e1e1e1;
  border: 1px solid #adadad;
`;

const GreyBtn = styled(WizardBtn)`
  margin: 0 2px 0 0;
  background: #e1e1e1;
  border-color: #d0d0d0;
`;

const EditInput = styled.div`
  flex: 1;
  height: 24px;
  margin: 0 3px 0 -1px;
  background: #fff;
  border: 1px solid #85858c;
`;

const FilterSelect = styled.div`
  width: 122px;
  height: 24px;
  margin-left: 1px;
  display: flex;
  align-items: center;
  justify-content: space-between;
  padding: 0 4px;
  background: #e1e1e1;
  border: 1px solid #bdbdbd;
`;

const TableWrap = styled.div`
  flex: 1;
  min-height: 0;
  display: flex;
  background: #fff;
`;

const TableArea = styled.div`
  flex: 1;
  min-width: 0;
  overflow: hidden;
  font-size: 12px;
`;

const tableColumns = "150px repeat(11, 100px)";

const HeaderRow = styled.div`
  display: grid;
  grid-template-columns: ${tableColumns};
  width: max-content;
  height: 27px;
  font-size: 11.3px;
`;

const HeaderCell = styled.div`
  display: flex;
  align-items: center;
  padding: 0 3px;
  border-right: 1px solid #e0e0e0;
  color: #222;
`;

const HeaderLabel = styled.div`
  width: 100%;
  display: flex;
  justify-content: center;
  overflow: hidden;
  white-space: nowrap;
`;

const PinRow = styled.div`
  display: grid;
  grid-template-columns: ${tableColumns};
  width: max-content;
  height: 19px;
  background: ${({ $tone }) => $tone};
  border-bottom: 1px solid #d4d4d8;
`;

const Cell = styled.div`
  display: flex;
  align-items: center;
  padding-left: 3px;
  border-right: 1px solid #d4d4d8;
  white-space: nowrap;
  overflow: hidden;
  color: #111;
`;

const NameCell = styled(Cell)`
  gap: 5px;
`;

const StatusBar = styled.div`
  height: 24px;
  flex: none;
  display: flex;
  align-items: center;
  background: #f0f0f0;
  font-size: 12px;
`;

const StatusPercent = styled.div`
  margin-left: 1820px;
  padding-left: 5px;
  height: 100%;
  display: flex;
  align-items: center;
  border-left: 1px solid #d0d0d0;
`;

const StatusTime = styled.div`
  margin-left: 28px;
  white-space: nowrap;
`;

const Taskbar = styled.div`
  height: 40px;
  flex: none;
  display: flex;
  align-items: stretch;
  background: linear-gradient(90deg, #1f3a44 0%, #203846 35%, #1b2a47 100%);
  color: #fff;
`;

const StartBtn = styled.div`
  width: 48px;
  flex: none;
  display: flex;
  align-items: center;
  justify-content: center;
`;

const SearchField = styled.div`
  width: 288px;
  flex: none;
  display: flex;
  align-items: center;
  padding-left: 12px;
  background: #f3f3f3;
  color: #333;
`;

const SearchText = styled.div`
  width: 169px;
  margin-left: 8px;
  flex: none;
  font-family: "Noto Sans CJK TC", "Noto Sans", sans-serif;
  font-size: 16px;
  white-space: nowrap;
`;

const TaskIcons = styled.div`
  display: flex;
`;

const TaskBtn = styled.div`
  width: ${({ $active }) => ($active ? "46px" : "49px")};
  margin-left: ${({ $active }) => ($active ? "2px" : 0)};
  display: flex;
  align-items: center;
  justify-content: center;
  background: ${({ $active }) => ($active ? "#3d545f" : "transparent")};
  box-shadow: ${({ $open }) => ($open ? "inset 0 -2px 0 #7ab4e0" : "none")};
`;

const Tray = styled.div`
  margin-left: auto;
  display: flex;
  align-items: center;
  padding-right: 15px;
`;

const TrayGroup = styled.div`
  display: flex;
  align-items: center;
  gap: 7px;
`;

const ImeLabel = styled.div`
  margin-left: 7px;
  font-family: "Noto Sans CJK TC", sans-serif;
  font-size: 16px;
`;

const Clock = styled.div`
  width: 72px;
  margin-left: 4px;
  display: flex;
  flex-direction: column;
  align-items: center;
  font-family: "Noto Sans CJK TC", "Noto Sans", sans-serif;
  font-size: 12.5px;
  line-height: 18px;
`;

const Notify = styled.div`
  position: relative;
  margin-left: 13px;
  width: 26px;
  height: 24px;
  display: flex;
  align-items: center;
`;

const NotifyBadge = styled.div`
  position: absolute;
  right: -4px;
  bottom: -5px;
  width: 16px;
  height: 16px;
  border-radius: 50%;
  background: #333;
  border: 1px solid #888;
  display: flex;
  align-items: center;
  justify-content: center;
  font-size: 11px;
  font-weight: 700;
`;

export default App;
